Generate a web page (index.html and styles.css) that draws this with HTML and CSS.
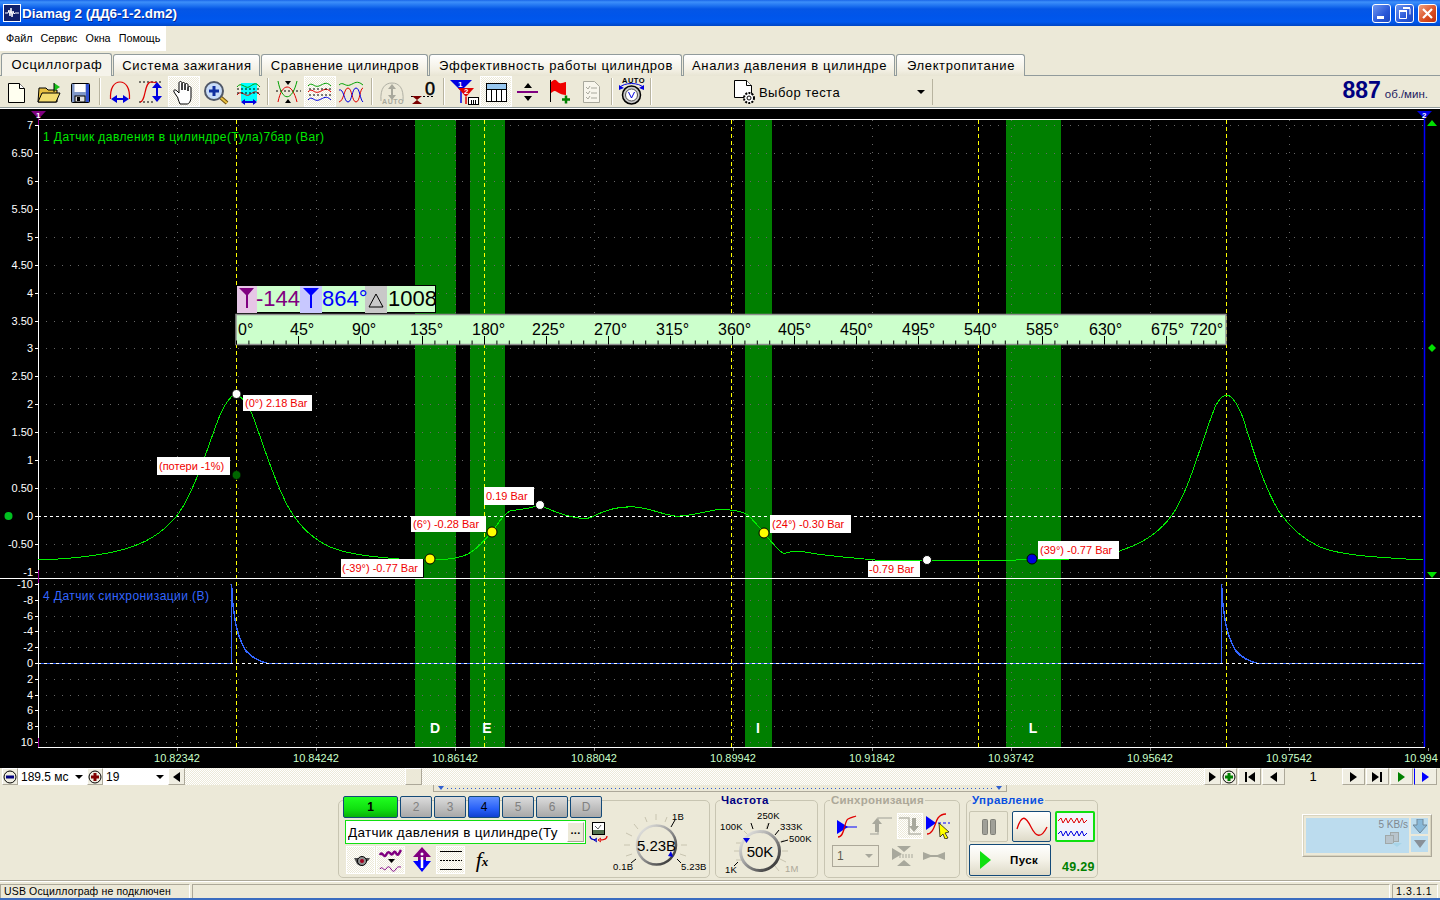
FILE: index.html
```html
<!DOCTYPE html>
<html lang="ru">
<head>
  <meta charset="UTF-8">
  <title>Diamag 2</title>
  <link rel="stylesheet" href="styles.css">
</head>
<body>
  <div class="titlebar">
    <svg class="app-icon" width="18" height="18" viewBox="0 0 18 18"><rect x=".5" y=".5" width="17" height="17" fill="#10206a" stroke="#fff"/><path d="M2 9h3l1-3 1 6 1-8 1 9 1-6 1 3 1-1h4" fill="none" stroke="#fff"/></svg>
    <span class="title-text">Diamag 2 (ДД6-1-2.dm2)</span>
    <div class="win-btns">
      <div class="win-btn"><svg width="19" height="19"><rect x="5" y="12" width="7" height="3" fill="#fff"/></svg></div>
      <div class="win-btn"><svg width="19" height="19"><path d="M8 4.500h7v6M4.500 7.500h7v7h-7z" fill="none" stroke="#fff"/><path d="M4 7h8M8 4h7" stroke="#fff" stroke-width="2"/></svg></div>
      <div class="win-btn close"><svg width="19" height="19"><path d="M5 5l9 9M14 5l-9 9" stroke="#fff" stroke-width="2.200"/></svg></div>
    </div>
  </div>

  <div class="menubar">
    <div class="menu"><span>Файл</span><span>Сервис</span><span>Окна</span><span>Помощь</span></div>
  </div>

  <div class="tabs">
    <div class="tab active">Осциллограф</div>
    <div class="tab w1">Система зажигания</div>
    <div class="tab w2">Сравнение цилиндров</div>
    <div class="tab w3">Эффективность работы цилиндров</div>
    <div class="tab w4">Анализ давления в цилиндре</div>
    <div class="tab w5">Электропитание</div>
  </div>

  <div class="toolbar">
    <div class="tb"><svg width="32" height="31"><path d="M8.500 7.500h11l5 5v14h-16z" fill="#fffff0" stroke="#000"/><path d="M19.500 7.500v5h5" fill="#fff" stroke="#000"/></svg></div>
    <div class="tb"><svg width="32" height="31"><path d="M6 26l1-14h7l2 2h9v12z" fill="#e8c040" stroke="#000"/><path d="M6 26l4-9h18l-4 9z" fill="#f4dc70" stroke="#000"/><path d="M22 7l6 4-6 4z" fill="#18c018"/><path d="M22 7v9" stroke="#000"/></svg></div>
    <div class="tb"><svg width="32" height="31"><rect x="7.500" y="7.500" width="18" height="19" rx="1" fill="#8098c8" stroke="#000"/><rect x="10.500" y="8" width="11" height="8" fill="#fff"/><rect x="11" y="20" width="10" height="6" fill="#e0e0e0" stroke="#000"/><rect x="13" y="21" width="3" height="4" fill="#000"/><rect x="22" y="8" width="3" height="18" fill="#3050d0"/></svg></div>
    <div class="tb-sep"></div>
    <div class="tb"><svg width="32" height="31"><path d="M6.500 23C6 12 10 6 16 6s10 6 9.500 17" fill="none" stroke="#e00000" stroke-width="1.200"/><path d="M9 23h14" stroke="#0000e0" stroke-width="2"/><path d="M13 19l-6 4 6 4zM19 19l6 4-6 4z" fill="#0000e0"/></svg></div>
    <div class="tb"><svg width="32" height="31"><path d="M3 6h24M3 26h14" stroke="#000" stroke-dasharray="2 2"/><path d="M4 26c6 0 4-20 11-20 3 0 5 0 7 2" fill="none" stroke="#e00000" stroke-width="1.200"/><path d="M21 9v14" stroke="#0000e0" stroke-width="2"/><path d="M16 12l5-6 5 6zM16 20l5 6 5-6z" fill="#0000e0"/></svg></div>
    <div class="tb pressed"><svg width="32" height="31"><path d="M10 22l-4-6c-1-2 1-3 3-1l2 2V7c0-2 3-2 3 0v7-6c0-2 3-2 3 0v6-5c0-2 3-2 3 0v6-3c0-2 3-2 3 0v9c0 4-2 7-4 7h-7c-1-2-1-3-2-5z" fill="#fff" stroke="#000"/></svg></div>
    <div class="tb"><svg width="32" height="31"><path d="M19 20l8 7" stroke="#705010" stroke-width="4"/><path d="M20 21l7 6" stroke="#e8c040" stroke-width="2"/><circle cx="14" cy="15" r="9" fill="#c8dcf8" stroke="#505868" stroke-width="2"/><path d="M9 15h10M14 10v10" stroke="#1030a0" stroke-width="3"/></svg></div>
    <div class="tb"><svg width="32" height="31"><rect x="9" y="7" width="16" height="18" fill="#00ffff"/><path d="M5 11c4-6 8 2 12 0s6-6 11 0" fill="none" stroke="#00a000"/><path d="M5 19c4-6 8 2 12 0s6-6 11 0" fill="none" stroke="#e00000"/><path d="M5 13h24M5 17h24" stroke="#000" stroke-dasharray="2 2"/><path d="M11 26h12" stroke="#0000e0" stroke-width="2"/><path d="M13 23l-4 3 4 3zM21 23l4 3-4 3z" fill="#0000e0"/></svg></div>
    <div class="tb-sep"></div>
    <div class="tb"><svg width="32" height="31"><path d="M4 15h25" stroke="#000" stroke-dasharray="2 2"/><path d="M6 26C10 6 20 6 25 26" fill="none" stroke="#e00000"/><path d="M6 5C10 26 20 26 25 5" fill="none" stroke="#00a000"/><path d="M13 5h6l-3 4zM13 27h6l-3-4z"/></svg></div>
    <div class="tb pressed"><svg width="32" height="31"><path d="M4 10c4-5 6 2 11 0s7-5 12 0" fill="none" stroke="#00a000"/><path d="M4 16c4-5 6 2 11 0s7-5 12 0" fill="none" stroke="#e00000"/><path d="M4 24c4-5 6 2 11 0s7-5 12 0" fill="none" stroke="#0000e0"/><path d="M5 13h23M5 19h23" stroke="#000" stroke-dasharray="2 2"/></svg></div>
    <div class="tb"><svg width="32" height="31"><path d="M3 9c4-4 6 2 11 0s7-5 13 0" fill="none" stroke="#00a000"/><path d="M3 26c5-1 5-14 9-14s4 14 8 14 4-14 7-14" fill="none" stroke="#e00000"/><path d="M3 14c5-2 5 12 9 12s4-14 8-14 4 12 7 14" fill="none" stroke="#0000e0"/></svg></div>
    <div class="tb-sep"></div>
    <div class="tb"><svg width="32" height="31"><path d="M5 25C4 12 9 7 16 7s12 5 11 18" fill="none" stroke="#b0b0a4"/><path d="M16 11v10" stroke="#a8a89c" stroke-width="2"/><path d="M12 13l4-5 4 5zM12 19l4 5 4-5z" fill="#a8a89c"/><text class="auto-txt" x="6" y="28">AUTO</text></svg></div>
    <div class="tb"><svg width="32" height="31"><path d="M3 20.500h24" stroke="#000" stroke-dasharray="2 2"/><path d="M4 20h10l-5 4zM4 28h10l-5-4z" fill="#7a0000"/><text class="zero-txt" x="17" y="19">0</text></svg></div>
    <div class="tb-sep"></div>
    <div class="tb"><svg width="32" height="31"><path d="M2 4h22l-11 11z" fill="#0000e0"/><path d="M13 15v12" stroke="#0000e0" stroke-width="1.500"/><text class="mark-txt" x="10" y="11">1</text><path d="M10 12h16l-8 9z" fill="#e00000"/><path d="M18 21v7" stroke="#e00000" stroke-width="1.500"/><text class="mark-txt" x="16" y="18">2</text><rect x="20.500" y="21.500" width="10" height="7" fill="#fff" stroke="#000"/><path d="M23.500 24v4M25.500 24v4M27.500 24v4" stroke="#000"/></svg></div>
    <div class="tb pressed"><svg width="32" height="31"><rect x="6.500" y="7.500" width="20" height="18" fill="#fff" stroke="#000"/><rect x="7" y="8" width="19" height="5" fill="#98c8f0"/><path d="M6 13.500h21M11.500 13v13M16.500 13v13M21.500 13v13" stroke="#000"/></svg></div>
    <div class="tb"><svg width="32" height="31"><path d="M5 16h21" stroke="#800080" stroke-width="2"/><path d="M12 12l4-5 4 5zM12 20l4 5 4-5z"/></svg></div>
    <div class="tb"><svg width="32" height="31"><path d="M6.500 4v22" stroke="#000"/><path d="M7 6c4-3 4-3 7 0s5 0 8 0v13c-3 0-6-1-9-3s-3-1-6 1z" fill="#f00000"/><path d="M18 23.500h8M22 19.500v8" stroke="#008000" stroke-width="2.500"/></svg></div>
    <div class="tb"><svg width="32" height="31"><path d="M7.500 5.500h11l5 5v16h-16z" fill="#f8f6ec" stroke="#a8a89c"/><path d="M10 11l2 2 2-3M10 16l2 2 2-3M10 21l2 2 2-3M15 12h6M15 17h6M15 22h6" fill="none" stroke="#a8a89c"/></svg></div>
    <div class="tb-sep"></div>
    <div class="tb"><svg width="32" height="31"><text class="auto-top" x="6" y="7">AUTO</text><path d="M3 12c5-6 20-6 25 0" fill="none" stroke="#0000e0"/><path d="M3 9v5l5-2zM28 9v5l-5-2z" fill="#0000e0"/><circle cx="15.500" cy="19" r="9" fill="#c8c8c8" stroke="#000" stroke-width="1.500"/><circle cx="15.500" cy="19" r="6" fill="#fff" stroke="#505050"/><path d="M12.500 16l3 6 3-6" fill="none" stroke="#0000e0"/></svg></div>
    <div class="tb-sep last"></div>
    <div class="test-select">
      <svg width="24" height="26"><path d="M1.500 1.500h12l5 5v12h-17z" fill="#fff" stroke="#000"/><path d="M13.500 1.500v5h5" fill="#fff" stroke="#000"/><circle cx="16" cy="19" r="5" fill="#fff" stroke="#000" stroke-width="2" stroke-dasharray="2 1.200"/><circle cx="16" cy="19" r="2" fill="none" stroke="#000"/></svg>
      <span class="test-label">Выбор теста</span>
      <span class="arrow"></span>
    </div>
    <div class="rpm"><b>887</b><span>об./мин.</span></div>
  </div>

  <div class="scope">
    <svg width="1440" height="660" viewBox="0 108 1440 660">
      <!-- зоны -->
      <path fill="#007f00" d="M415 120h41v627h-41zM470 120h35v627h-35zM745 120h27v627h-27zM1006 120h55v627h-55z"/>
      <!-- сетка -->
      <path class="grid-h" d="M38 125.500H1424M38 153.500H1424M38 181.500H1424M38 209.500H1424M38 237.500H1424M38 265.500H1424M38 293.500H1424M38 321.500H1424M38 348.500H1424M38 376.500H1424M38 404.500H1424M38 432.500H1424M38 460.500H1424M38 488.500H1424M38 544.500H1424M38 572.500H1424M38 584.500H1424M38 600.500H1424M38 616.500H1424M38 631.500H1424M38 647.500H1424M38 679.500H1424M38 695.500H1424M38 710.500H1424M38 726.500H1424M38 742.500H1424"/>
      <path class="grid-v" d="M177.500 120V747M316.500 120V747M455.500 120V747M594.500 120V747M733.500 120V747M872.500 120V747M1011.500 120V747M1150.500 120V747M1289.500 120V747"/>
      <path class="cursor-v" d="M236.500 120V747M484.500 120V747M731.500 120V747M978.500 120V747M1226.500 120V747"/>
      <path class="zero-line" d="M38 516.500H1424"/>
      <!-- оси -->
      <path class="axis" d="M38 119.500H1425M0 578.500H1440M38 747.500H1425M38.500 119V748"/>
      <path class="axis" d="M35 125.500h3M35 153.500h3M35 181.500h3M35 209.500h3M35 237.500h3M35 265.500h3M35 293.500h3M35 321.500h3M35 348.500h3M35 376.500h3M35 404.500h3M35 432.500h3M35 460.500h3M35 488.500h3M35 516.500h3M35 544.500h3M35 572.500h3M35 584.500h3M35 600.500h3M35 616.500h3M35 631.500h3M35 647.500h3M35 663.500h3M35 679.500h3M35 695.500h3M35 710.500h3M35 726.500h3M35 742.500h3"/>
      <path class="tick" d="M177.500 748v3M316.500 748v3M455.500 748v3M594.500 748v3M733.500 748v3M872.500 748v3M1011.500 748v3M1150.500 748v3M1289.500 748v3M1428.500 748v3"/>
      <path d="M38.500 119v6M38.500 570v13M38.500 738v9" stroke="#a000a0" fill="none"/>
      <path d="M1424.500 118V747" stroke="#0000ff" fill="none" stroke-width="1.500"/>
      <g class="y-labels">
        <text x="33" y="129">7</text><text x="33" y="157">6.50</text><text x="33" y="185">6</text><text x="33" y="213">5.50</text><text x="33" y="241">5</text><text x="33" y="269">4.50</text><text x="33" y="297">4</text><text x="33" y="325">3.50</text><text x="33" y="352">3</text><text x="33" y="380">2.50</text><text x="33" y="408">2</text><text x="33" y="436">1.50</text><text x="33" y="464">1</text><text x="33" y="492">0.50</text><text x="33" y="520">0</text><text x="33" y="548">-0.50</text><text x="33" y="576">-1</text>
        <text x="33" y="588">-10</text><text x="33" y="604">-8</text><text x="33" y="620">-6</text><text x="33" y="635">-4</text><text x="33" y="651">-2</text><text x="33" y="667">0</text><text x="33" y="683">2</text><text x="33" y="699">4</text><text x="33" y="714">6</text><text x="33" y="730">8</text><text x="33" y="746">10</text>
      </g>
      <g class="x-labels">
        <text x="177" y="762">10.82342</text><text x="316" y="762">10.84242</text><text x="455" y="762">10.86142</text><text x="594" y="762">10.88042</text><text x="733" y="762">10.89942</text><text x="872" y="762">10.91842</text><text x="1011" y="762">10.93742</text><text x="1150" y="762">10.95642</text><text x="1289" y="762">10.97542</text><text x="1421" y="762">10.994</text>
      </g>
      <text class="ch-green" x="43" y="141">1 Датчик давления в цилиндре(Тула)7бар (Bar)</text>
      <text class="ch-blue" x="43" y="600">4 Датчик синхронизации (В)</text>
      <!-- кривые -->
      <path class="trace-green" d="M38 560C70 559 100 556 125 549 145 543 160 535 175 518 192 498 205 455 218 420 224 405 230 396 236 394 241 396 247 404 252 414 262 440 275 485 290 510 302 530 315 540 330 547 350 555 375 557 405 559.500H430C445 560 458 559 468 554 478 549 484 540 492 532 498 524 503 514 510 511 520 509 530 509 540 505 550 510 555 512 565 515 575 518 585 520 592 517 605 510 620 506 635 507 650 508 660 514 675 516 685 517 700 513 715 510 730 509 740 510 748 515 755 522 760 528 764 533 772 543 778 550 784 554 790 551 797 551 805 552 825 556 845 557 880 560.500H1000.500L1032 559.500H1060C1080 559 1110 556 1125 549 1145 542 1160 532 1172 515 1190 490 1203 435 1216 405 1220 398 1224 395 1227 395 1232 396 1238 405 1243 418 1253 450 1265 490 1280 513 1292 530 1305 540 1320 547 1340 555 1370 557 1423 560"/>
      <path class="trace-blue" d="M38 663.500H231.500V584.500C232 598 233 608 235 620 237 632 241 643 246 651 251 657 258 661 268 663.500H1221.500V584.500C1222 598 1223 608 1225 620 1227 632 1231 643 1236 651 1241 657 1248 661 1258 663.500H1424"/>
      <path class="zero-line" d="M38 663.500H1424"/>
      <!-- подписи зон -->
      <g class="zone-labels"><text x="435" y="733">D</text><text x="487" y="733">E</text><text x="758" y="733">I</text><text x="1033" y="733">L</text></g>
      <!-- линейка -->
      <rect x="236.500" y="285.500" width="199" height="27" fill="#ccffcc" stroke="#000"/>
      <rect x="237" y="286" width="20" height="27" fill="#e6c6e6"/><rect x="300" y="286" width="22" height="27" fill="#c8c8ff"/><rect x="365" y="286" width="22" height="27" fill="#c8c8c8"/>
      <path d="M239 288h15l-6 7v13h-2V295z" fill="#800080"/><path d="M303 288h16l-7 7v13h-2V295z" fill="#0000ff"/><path d="M376 294l7 13h-14z" fill="none" stroke="#000"/>
      <text class="big-purple" x="256" y="306">-144</text><text class="big-blue" x="322" y="306">864°</text><text class="big-black" x="388" y="306">1008</text>
      <rect x="236" y="314.500" width="990" height="30" fill="#ccffcc" stroke="#909090" stroke-width="1.500"/>
      <path class="ruler-major" d="M298.500 336v8M360.500 336v8M422.500 336v8M484.500 336v8M546.500 336v8M608.500 336v8M670.500 336v8M732.500 336v8M794.500 336v8M856.500 336v8M918.500 336v8M980.500 336v8M1042.500 336v8M1104.500 336v8M1166.500 336v8"/>
      <path class="ruler-minor" d="M236 342.500H1226"/>
      <g class="ruler-txt">
        <text x="238" y="335">0°</text><text x="290" y="335">45°</text><text x="352" y="335">90°</text><text x="410" y="335">135°</text><text x="472" y="335">180°</text><text x="532" y="335">225°</text><text x="594" y="335">270°</text><text x="656" y="335">315°</text><text x="718" y="335">360°</text><text x="778" y="335">405°</text><text x="840" y="335">450°</text><text x="902" y="335">495°</text><text x="964" y="335">540°</text><text x="1026" y="335">585°</text><text x="1089" y="335">630°</text><text x="1151" y="335">675°</text><text x="1190" y="335">720°</text>
      </g>
      <!-- значения -->
      <g class="val">
        <rect x="243" y="395" width="69" height="16"/><text x="245" y="407">(0°) 2.18 Bar</text>
        <rect x="157" y="457" width="73" height="18"/><text x="159" y="470">(потери -1%)</text>
        <rect x="484" y="487" width="50" height="18"/><text x="486" y="500">0.19 Bar</text>
        <rect x="411" y="516" width="75" height="16"/><text x="413" y="528">(6°) -0.28 Bar</text>
        <rect x="341" y="559" width="82" height="18"/><text x="342" y="572">(-39°) -0.77 Bar</text>
        <path d="M423.500 559v18.500H341" fill="none" stroke="#000"/>
        <rect x="770" y="515" width="81" height="18"/><text x="772" y="528">(24°) -0.30 Bar</text>
        <rect x="868" y="561" width="52" height="16"/><text x="869" y="573">-0.79 Bar</text>
        <rect x="1038" y="541" width="81" height="18"/><text x="1040" y="554">(39°) -0.77 Bar</text>
      </g>
      <g class="dots">
        <circle cx="236.500" cy="394" r="4.500" fill="#fff"/><circle cx="236.500" cy="475" r="4.500" fill="#006600"/>
        <circle cx="430" cy="559" r="5" fill="#ffff00"/><circle cx="492" cy="532" r="5" fill="#ffff00"/><circle cx="764" cy="533" r="5" fill="#ffff00"/>
        <circle cx="540" cy="505" r="4.500" fill="#fff"/><circle cx="927" cy="560" r="4.500" fill="#fff"/><circle cx="1032" cy="559" r="5" fill="#0000e0"/>
      </g>
      <!-- маркеры -->
      <path d="M31 111h15l-7.500 8z" fill="#800080"/><text class="mark-txt" x="36" y="118">1</text>
      <path d="M1417 111h15l-7.500 8z" fill="#0000e0"/><text class="mark-txt" x="1422" y="118">2</text>
      <path d="M1427 126l5-6 5 6zM1427 572l5 6 5-6zM1432 344l4 4-4 4-4-4z" fill="#00e000"/>
      <circle cx="8.500" cy="516" r="4" fill="#00c020"/>
    </svg>
  </div>

  <div class="scrollrow">
    <div class="sbtn"><svg width="14" height="14"><circle cx="7" cy="7" r="6" fill="none" stroke="#000"/><path d="M3 7h8" stroke="#000080" stroke-width="3"/></svg></div>
    <div class="combo c1">189.5 мс<span class="arrow"></span></div>
    <div class="sbtn"><svg width="14" height="14"><circle cx="7" cy="7" r="6" fill="none" stroke="#000"/><path d="M3 7h8M7 3v8" stroke="#800000" stroke-width="3"/></svg></div>
    <div class="combo c2">19<span class="arrow"></span></div>
    <div class="sbtn arr"><span class="tri-l"></span></div>
    <div class="track"><div class="thumb"></div></div>
    <div class="sbtn arr"><span class="tri-r"></span></div>
    <div class="sbtn"><svg width="14" height="14"><circle cx="7" cy="7" r="6" fill="none" stroke="#000"/><path d="M3 7h8M7 3v8" stroke="#008000" stroke-width="3"/></svg></div>
    <div class="sbtn wide"><i class="bar"></i><span class="tri-l"></span></div>
    <div class="sbtn wide"><span class="tri-l"></span></div>
    <div class="page-no">1</div>
    <div class="sbtn wide"><span class="tri-r"></span></div>
    <div class="sbtn wide"><span class="tri-r"></span><i class="bar"></i></div>
    <div class="sbtn wide"><span class="tri-r green"></span></div>
    <div class="sbtn wide blue-edge"><span class="tri-r blue"></span></div>
  </div>

  <div class="lower">
    <div class="mini-strip"><span class="mini-tri"></span><span class="mini-dots"></span><span class="mini-tri"></span></div>
    <div class="panels">
      <div class="group g-channel">
        <div class="ch-side">
          <div class="ch-btns">
            <div class="ch on-green">1</div><div class="ch">2</div><div class="ch">3</div><div class="ch on-blue">4</div><div class="ch">5</div><div class="ch">6</div><div class="ch">D</div>
          </div>
          <div class="ch-input-row">
            <div class="ch-input"><span>Датчик давления в цилиндре(Ту</span><div class="dots-btn">...</div></div>
            <svg width="20" height="22"><rect x="3.500" y="1.500" width="12" height="12" fill="#fff" stroke="#000"/><rect x="4" y="9" width="11" height="4" fill="#507050"/><path d="M6 5l3 3 3-4" fill="none" stroke="#606060"/><path d="M1 15c0 4 4 4 7 4" fill="none" stroke="#0000c0" stroke-width="1.300"/><path d="M8 17l-3 2 3 2" fill="none" stroke="#0000c0"/><path d="M11 19c4 0 7-1 7-4" fill="none" stroke="#e00000" stroke-width="1.300"/><path d="M12 17l-3 2 3 2" fill="none" stroke="#e00000"/></svg>
          </div>
          <div class="ch-tools">
            <div class="ct pressed"><svg width="28" height="28"><path d="M7 12h16l-2 3h-2c0 6-9 6-10 1z" fill="#505050"/><circle cx="15" cy="15" r="4.500" fill="#909090" stroke="#000"/><circle cx="15" cy="15" r="2" fill="#a00020"/></svg></div>
            <div class="ct pressed"><svg width="28" height="28"><path d="M3 9c2-5 4 4 6 0s3-3 5-1 3-5 5-1 3 0 5-3" fill="none" stroke="#800080" stroke-width="2.500"/><path d="M11 13h7l-3.500 4z"/><path d="M3 23c2-4 4 3 6 0s3-3 5 0 3 3 5 0 3-2 5-2" fill="none" stroke="#800080"/></svg></div>
            <div class="ct plain"><svg width="28" height="28"><path d="M14 1l9 10h-5v3h-8v-3H5z" fill="#800080"/><path d="M5 15h5v-1h8v1h5l-9 11z" fill="#0000ff"/><path d="M14 11v11" stroke="#fff" stroke-width="2.500"/><circle cx="14" cy="8" r="1.500" fill="#fff"/></svg></div>
            <div class="ct pressed narrow"><svg width="28" height="28"><path d="M3 5.500h22M3 23.500h22" stroke="#000"/><path d="M3 14.500h22" stroke="#000" stroke-dasharray="2 1"/></svg></div>
            <div class="ct plain fx"><i>f</i><b>x</b></div>
          </div>
        </div>
        <svg class="knob" width="98" height="76" viewBox="610 802 98 76">
          <path class="knob-ticks" d="M632 855l-6 2M630 846h-6M632 837l-6-3M638 830l-4-5M647 823l-2-5M656 821v-6M665 823l2-5M681 846h6M680 855l6 2"/>
          <path d="M636 860l-5 4M671 828l4-7M677 860l4 4" stroke="#000" fill="none"/>
          <circle cx="656.500" cy="846" r="19.500" fill="none" stroke="url(#ring)" stroke-width="2.500"/>
          <path d="M668 857l5 1-2-6z" fill="#0000e0"/>
          <text class="knob-val" x="656.500" y="852">5.23В</text>
          <text class="knob-tx" x="672" y="821">1В</text><text class="knob-tx" x="613" y="871">0.1В</text><text class="knob-tx" x="681" y="871">5.23В</text>
        </svg>
      </div>

      <fieldset class="group g-freq">
        <legend class="lg-navy">Частота</legend>
        <svg class="knob" width="100" height="70" viewBox="716 808 100 70">
          <path class="knob-ticks" d="M742 843h-6M740 851h-6M742 860h-6M748 835l-4-4M766 829l2-6M775 835l4-5M778 843l6-3M782 851h6M780 859l6 3M775 866l4 5"/>
          <path d="M738 862l-4 4M753 829l-2-6M767 829l2-6M775 835l4-5M781 842l7-2" stroke="#000" fill="none"/>
          <circle cx="760" cy="851" r="19.500" fill="none" stroke="url(#ring)" stroke-width="3"/>
          <path d="M743 838h7l-3.500 5z" fill="#0000e0"/>
          <text class="knob-val" x="760" y="857">50K</text>
          <text class="knob-tx" x="720" y="830">100K</text><text class="knob-tx" x="757" y="819">250K</text><text class="knob-tx" x="780" y="830">333K</text><text class="knob-tx" x="789" y="842">500K</text><text class="knob-tx" x="725" y="873">1K</text><text class="knob-tx dim" x="785" y="872">1M</text>
        </svg>
      </fieldset>

      <fieldset class="group g-sync">
        <legend class="lg-gray">Синхронизация</legend>
        <div class="sync-row">
          <svg width="26" height="26"><path d="M2 5l11 7-11 7z" fill="#0000ff" transform="translate(0 2)"/><path d="M2 14h20" stroke="#0000ff"/><path d="M3 24c7 0 6-16 10-18s6-2 8-3" fill="none" stroke="#e00000" stroke-width="1.300"/></svg>
          <svg width="26" height="26" class="sp1"><path d="M2 21h8V5h14" fill="none" stroke="#b8b8ac" stroke-width="1.500"/><path d="M4 11l5-6 5 6h-3v8H7v-8z" fill="#a8a89c"/></svg>
          <div class="sync-pressed"><svg width="26" height="26"><path d="M2 5h10v16h12" fill="none" stroke="#b8b8ac" stroke-width="1.500"/><path d="M12 13l5 6 5-6h-3V5h-4v8z" fill="#a8a89c"/></svg></div>
          <svg width="26" height="26"><path d="M0 3l10 7-10 7z" fill="#0000ff"/><path d="M2 10h22" stroke="#0000ff" stroke-dasharray="3 2"/><path d="M1 21c7 0 8-12 11-16s6-4 8-4" fill="none" stroke="#e00000" stroke-width="1.300"/><path d="M13 10l10 9-4 1 3 5-3 1-2-5-3 3z" fill="#ffff00" stroke="#000" stroke-width=".700"/></svg>
        </div>
        <div class="sync-row second">
          <div class="sync-sel">1<span class="arrow gray"></span></div>
          <svg width="24" height="24"><path d="M1 4l10 6-10 6zM6 2h14l-7 6zM6 22h14l-7-6z" fill="#a8a89c"/><path d="M8 11h14M8 13h14" stroke="#a8a89c" stroke-dasharray="2 1"/></svg>
          <svg class="sp2" width="24" height="24"><path d="M1 8l10 4-10 4zM23 8l-10 4 10 4z" fill="#a8a89c"/><path d="M1 12h22" stroke="#a8a89c" stroke-width="2"/></svg>
        </div>
      </fieldset>

      <fieldset class="group g-ctrl">
        <legend class="lg-blue">Управление</legend>
        <div class="ctrl-grid">
          <div class="cbtn"><svg width="20" height="18"><rect x="3.500" y="1.500" width="5" height="15" rx="1" fill="#a0a098" stroke="#808078"/><rect x="11.500" y="1.500" width="5" height="15" rx="1" fill="#a0a098" stroke="#808078"/></svg></div>
          <div class="cbtn navy"><svg width="32" height="24"><path d="M1 14C6 -2 10 2 15 12s10 12 16 0" fill="none" stroke="#e00000" stroke-width="1.300"/></svg></div>
          <div class="cbtn greenb"><svg width="36" height="26"><path d="M1 7l3-3 2 5 3-5 2 5 3-5 3 5 3-5 2 5 3-5 2 5 3-3" fill="none" stroke="#e00000"/><path d="M1 20l3-3 2 5 3-5 2 5 3-5 3 5 3-5 2 5 3-5 2 5 3-3" fill="none" stroke="#0000e0"/></svg></div>
          <div class="cbtn navy start"><span class="play"></span><b>Пуск</b></div>
          <div class="hz">49.29</div>
        </div>
      </fieldset>

      <div class="netbox">
        <div class="net-main">
          <span>5 KB/s</span>
          <svg width="18" height="18"><rect x="5.500" y="2.500" width="8" height="9" fill="#b8c4cc" stroke="#a0a8a8"/><rect x=".5" y="5.500" width="8" height="8" fill="#b8c4cc" stroke="#a0a8a8"/><path d="M7 13h10l-5 4z" fill="#a8d4e8"/></svg>
        </div>
        <div class="net-side">
          <div class="net-btn"><svg width="14" height="14"><path d="M4 0h6v6h4l-7 8-7-8h4z" fill="#88b8d8" stroke="#708898"/></svg></div>
          <div class="net-btn"><svg width="12" height="8"><path d="M0 0h12L6 8z" fill="#889098"/></svg></div>
        </div>
      </div>
    </div>
  </div>

  <div class="statusbar">
    <div class="st s1">USB Осциллограф не подключен</div>
    <div class="st s2"></div>
    <div class="st s3">1.3.1.1</div>
  </div>
  <div class="taskline"></div>

  <svg width="0" height="0" class="defs"><defs><linearGradient id="ring" x1="0" y1="0" x2="1" y2="1"><stop offset="0" stop-color="#f4f4f0"/><stop offset=".45" stop-color="#a0a0a0"/><stop offset="1" stop-color="#202020"/></linearGradient></defs></svg>
</body>
</html>
```

FILE: styles.css
```css
* { box-sizing: border-box; }

body {
  margin: 0;
  width: 1440px;
  height: 900px;
  overflow: hidden;
  background: #ece9d8;
  font-family: "Liberation Sans", Arial, sans-serif;
  font-size: 12px;
  color: #000;
}

svg { display: block; flex: none; }
.defs { position: absolute; }

/* заголовок окна */
.titlebar {
  height: 26px;
  display: flex;
  align-items: center;
  padding-left: 3px;
  background: linear-gradient(#1a66e8 0, #3d8ffa 2px, #2478f2 5px, #0456e6 9px, #0055ea 16px, #0058ee 22px, #0046c4 26px);
}
.title-text {
  margin-left: 1px;
  color: #fff;
  font-size: 13.500px;
  font-weight: bold;
  text-shadow: 1px 1px 0 #0a2a90;
}
.win-btns { margin-left: auto; display: flex; gap: 4px; padding-right: 3px; }
.win-btn {
  width: 19px;
  height: 19px;
  border: 1px solid #fff;
  border-radius: 3px;
  background: linear-gradient(135deg, #7098f0, #2a58d8 60%, #1c48c0);
}
.win-btn svg { margin: -1px; }
.win-btn.close { background: linear-gradient(135deg, #f0a080, #d84c20 60%, #c03010); }

/* меню */
.menubar { height: 25px; }
.menu {
  width: 166px;
  height: 25px;
  background: #fff;
  display: flex;
  align-items: center;
  gap: 8px;
  padding: 0 0 2px 6px;
  font-size: 10.800px;
}

/* вкладки */
.tabs {
  height: 25px;
  padding: 2px 0 0 1px;
  display: flex;
  gap: 1px;
  border-bottom: 1px solid #919b9c;
}
.tab {
  height: 22px;
  margin-top: 1px;
  padding: 3px 0 0 1px;
  border: 1px solid #919b9c;
  border-bottom: 0;
  border-radius: 3px 3px 0 0;
  background: linear-gradient(#fff, #f3f0e4 70%, #e8e5d4);
  text-align: center;
  font-size: 13px;
  letter-spacing: .65px;
  white-space: nowrap;
}
.tab.active {
  width: 111px;
  height: 23px;
  margin-top: 0;
  background: #f5f3ea;
}
.w1 { width: 147px; }
.w2 { width: 167px; }
.w3 { width: 253px; }
.w4 { width: 212px; }
.w5 { width: 129px; }

/* панель инструментов */
.toolbar {
  height: 32px;
  display: flex;
  align-items: center;
  border-bottom: 1px solid #919b9c;
}
.tb { width: 32px; height: 31px; }
.tb.pressed, .ct.pressed, .sync-pressed {
  background: repeating-conic-gradient(#fff 0 25%, #ece9d8 0 50%) 0 0 / 2px 2px;
  outline: 1px solid #fff;
  outline-offset: -1px;
}
.tb-sep {
  width: 8px;
  height: 27px;
  background: linear-gradient(90deg, transparent 3px, #b8b4a0 3px, #b8b4a0 4px, #fff 4px, #fff 5px, transparent 5px);
}
.tb-sep.last { margin-left: -1px; }
.auto-txt { font-size: 7px; font-weight: bold; fill: #a8a89c; letter-spacing: .6px; }
.auto-top { font-size: 7.500px; font-weight: bold; fill: #000; letter-spacing: .5px; }
.zero-txt { font-size: 18px; fill: #000; stroke: #000; stroke-width: .5px; }
.mark-txt { font-size: 8px; font-weight: bold; fill: #fff; }
.test-select {
  width: 200px;
  margin-left: 78px;
  height: 26px;
  display: flex;
  align-items: center;
  border-right: 1px solid #b8b4a0;
}
.test-label { margin: 1px 0 0 2px; font-size: 13px; letter-spacing: .45px; }
.test-select .arrow { margin-left: auto; margin-right: 7px; }
.arrow {
  display: inline-block;
  width: 0;
  height: 0;
  border: 4px solid transparent;
  border-top: 4px solid #000;
  border-bottom: 0;
}
.arrow.gray { border-top-color: #a8a89c; }
.rpm {
  margin: -3px 0 0 auto;
  padding-right: 12px;
  display: flex;
  align-items: baseline;
  gap: 4px;
  color: #000080;
}
.rpm b { font-size: 23px; }
.rpm span { font-size: 11.500px; color: #202060; }

/* осциллограмма */
.scope {
  height: 660px;
  background: #000;
  border-top: 1px solid #fff;
  overflow: hidden;
}
.scope svg { margin-top: -1px; }
.scope text { font-family: "Liberation Sans", Arial, sans-serif; }
.grid-h { stroke: #666; stroke-dasharray: 1 7; fill: none; }
.grid-v { stroke: #666; stroke-dasharray: 1 7; fill: none; }
.cursor-v { stroke: #ffff00; stroke-dasharray: 4 3; fill: none; }
.zero-line { stroke: #fff; stroke-dasharray: 3 3; fill: none; }
.axis { stroke: #fff; fill: none; }
.tick { stroke: #909090; fill: none; }
.y-labels text { fill: #fff; font-size: 11px; text-anchor: end; }
.x-labels text { fill: #c8ffc8; font-size: 11px; text-anchor: middle; }
.ch-green { fill: #00e800; font-size: 12px; letter-spacing: .42px; }
.ch-blue { fill: #3366ff; font-size: 12px; letter-spacing: .42px; }
.trace-green { stroke: #00ee00; fill: none; shape-rendering: crispEdges; }
.trace-blue { stroke: #3366ff; fill: none; stroke-width: 1.500; shape-rendering: crispEdges; }
.zone-labels text { fill: #fff; font-size: 14px; font-weight: bold; text-anchor: middle; }
.big-purple { fill: #800080; font-size: 22px; }
.big-blue { fill: #0000ff; font-size: 22px; }
.big-black { fill: #000; font-size: 22px; }
.ruler-major { stroke: #000; fill: none; }
.ruler-minor { stroke: #000; stroke-dasharray: 1 11.400; stroke-width: 4; fill: none; }
.ruler-txt text { fill: #000; font-size: 16px; }
.val rect { fill: #fff; }
.val text { fill: #f00000; font-size: 11px; }
.dots circle { stroke: #000; }

/* строка прокрутки */
.scrollrow {
  height: 17px;
  display: flex;
  padding-left: 2px;
  background: #ece9d8;
}
.sbtn {
  width: 16px;
  height: 17px;
  flex: none;
  display: flex;
  align-items: center;
  justify-content: center;
  background: #f0eee2;
  border: 1px solid;
  border-color: #fff #aca899 #aca899 #fff;
}
.sbtn.wide { width: 23px; margin-left: 1px; }
.sbtn.arr { width: 17px; }
.combo {
  flex: none;
  height: 17px;
  background: #fff;
  display: flex;
  align-items: center;
  padding-left: 3px;
  font-size: 12px;
}
.combo .arrow { margin-left: auto; margin-right: 4px; }
.c1 { width: 69px; }
.c2 { width: 65px; }
.track {
  width: 1019px;
  flex: none;
  height: 17px;
  padding-left: 220px;
  background: repeating-conic-gradient(#fff 0 25%, #ece9d8 0 50%) 0 0 / 2px 2px;
}
.thumb { width: 17px; height: 17px; background: #ece9d8; border: 1px solid; border-color: #fff #aca899 #aca899 #fff; }
.tri-l, .tri-r { width: 0; height: 0; border: 5px solid transparent; }
.tri-l { border-right: 7px solid #000; border-left: 0; }
.tri-r { border-left: 7px solid #000; border-right: 0; }
.tri-r.green { border-left-color: #008000; }
.tri-r.blue { border-left-color: #0000ff; }
.bar { width: 2px; height: 10px; background: #000; margin: 0 1px; }
.page-no { width: 56px; text-align: center; font-size: 13px; line-height: 17px; flex: none; }
.blue-edge { border-left-color: #0000ff; }

/* нижняя часть */
.lower { height: 95px; }
.mini-strip {
  width: 574px;
  height: 7px;
  margin-left: 433px;
  border: 1px solid #aca899;
  border-top: 0;
  display: flex;
  align-items: center;
  gap: 3px;
  padding: 0 4px;
}
.mini-dots {
  flex: 1;
  height: 1px;
  background: repeating-linear-gradient(90deg, #3060d0 0 1px, transparent 1px 4px);
}
.mini-tri { width: 0; height: 0; border: 3px solid transparent; border-top: 4px solid #3060d0; border-bottom: 0; }
.panels {
  display: flex;
  padding: 8px 0 0 338px;
}
.group {
  height: 78px;
  margin: 0;
  padding: 0;
  min-width: 0;
  border: 1px solid #c8c5b2;
  border-radius: 5px;
}
fieldset.group { height: 84px; margin-top: -6px; padding: 5px 0 0 4px; }
legend { padding: 0 1px; font-size: 11.500px; font-weight: bold; letter-spacing: .4px; line-height: 12px; margin-left: 4px; }
.lg-navy { color: #000080; }
.lg-gray { color: #aca899; letter-spacing: .25px; margin-left: 1px; }
.lg-blue { color: #0a50e0; margin-left: 0; }
.g-channel { width: 372px; display: flex; }
.g-freq { width: 103px; margin-left: 5px; }
.g-sync { width: 136px; margin-left: 6px; }
.g-ctrl { width: 132px; margin-left: 6px; }

.ch-side { width: 271px; padding-left: 4px; }
.ch-btns { display: flex; gap: 2px; margin-top: -5px; }
.ch {
  width: 32px;
  height: 22px;
  border: 1px solid #144a78;
  border-radius: 2px;
  background: linear-gradient(#dcdcdc, #bcbcbc 60%, #a8a8a8);
  color: #808080;
  text-align: center;
  line-height: 20px;
  font-size: 12px;
}
.on-green { width: 55px; background: linear-gradient(#20ff20, #10e010 60%, #08b008); color: #000; font-weight: bold; }
.on-blue { background: linear-gradient(#6090ff, #2860f8 60%, #1040d0); color: #000; }
.ch-input-row { display: flex; align-items: center; gap: 3px; margin-top: 2px; padding-left: 2px; }
.ch-input {
  width: 241px;
  height: 24px;
  border: 1px solid #10e010;
  background: #fff;
  display: flex;
  align-items: center;
  padding-left: 2px;
  font-size: 13.500px;
  letter-spacing: .3px;
  overflow: hidden;
  white-space: nowrap;
}
.ch-input span { flex: none; width: 219px; overflow: hidden; }
.dots-btn {
  width: 17px;
  height: 20px;
  background: #ece9d8;
  border: 1px solid;
  border-color: #fff #aca899 #aca899 #fff;
  text-align: center;
  font-size: 11px;
  font-weight: bold;
  line-height: 14px;
}
.ch-tools { display: flex; margin-top: 2px; padding-left: 3px; }
.ct { width: 29px; height: 28px; margin-right: 1px; display: flex; justify-content: center; }
.ct.plain { margin-left: 2px; width: 28px; }
.ct.narrow { margin-left: -1px; }
.fx { font-family: "Liberation Serif", serif; font-size: 22px; align-items: center; margin-left: 3px; }
.fx b { font-size: 13px; font-style: italic; margin-top: 4px; }
.knob { flex: none; }
.knob-ticks { stroke: #c8c4b0; fill: none; }
.knob-val { font-size: 15px; text-anchor: middle; fill: #000; }
.knob-tx { font-size: 9.500px; letter-spacing: .15px; fill: #000; }
.knob-tx.dim { fill: #aca899; }
.g-freq.group { padding: 0; }
.g-freq .knob { margin: 2px 0 0 0; }

.sync-row { display: flex; align-items: center; padding: 2px 0 0 6px; gap: 3px; }
.sync-row .sp1 { margin-left: 4px; }
.sync-pressed { width: 26px; height: 26px; }
.sync-row.second { padding: 5px 0 0 3px; gap: 0; }
.sync-sel {
  width: 47px;
  height: 22px;
  border: 1px solid #aca899;
  display: flex;
  align-items: center;
  padding-left: 4px;
  margin-right: 12px;
  color: #605c50;
}
.sync-sel .arrow { margin-left: auto; margin-right: 5px; }
.sp2 { margin-left: 7px; }

.ctrl-grid {
  display: grid;
  grid-template-columns: 39px 39px 40px;
  grid-template-rows: 31px 32px;
  gap: 2px 4px;
  margin: 0 0 0 -2px;
}
.cbtn {
  display: flex;
  align-items: center;
  justify-content: center;
  border: 1px solid #c8c5b2;
  border-radius: 2px;
}
.cbtn.navy {
  border: 1px solid #144a78;
  background: linear-gradient(#fff, #f4f2e8 50%, #dedac8);
}
.cbtn.greenb { border: 2px solid #10e010; background: #f4f4fc; }
.cbtn.start { grid-column: 1 / span 2; justify-content: flex-start; padding-left: 10px; }
.play { width: 0; height: 0; border: 9px solid transparent; border-left: 11px solid #10e010; border-right: 0; }
.start b { margin-left: 19px; font-size: 11.500px; letter-spacing: .4px; }
.hz { color: #008000; font-weight: bold; font-size: 12.500px; letter-spacing: .3px; align-self: end; padding: 0 0 2px 7px; white-space: nowrap; }

.netbox {
  width: 130px;
  height: 43px;
  margin: 14px 8px 0 auto;
  padding: 3px;
  display: flex;
  gap: 2px;
  border: 1px solid;
  border-color: #fff #aca899 #aca899 #fff;
  box-shadow: inset 0 0 0 1px #d8d4c0;
}
.net-main {
  width: 105px;
  background: #bcdcee;
  padding: 1px 1px 0 0;
  display: flex;
  flex-direction: column;
  align-items: flex-end;
  color: #808890;
  font-size: 10px;
}
.net-main svg { margin: 0 5px 0 0; }
.net-side { display: flex; flex-direction: column; gap: 2px; }
.net-btn { width: 17px; height: 16px; background: #bcdcee; display: flex; align-items: center; justify-content: center; }

/* статус */
.statusbar {
  height: 18px;
  display: flex;
  padding: 3px 2px 0 0;
  border-top: 1px solid #aca899;
  box-shadow: inset 0 1px 0 #fff;
}
.st {
  height: 14px;
  border-right: 1px solid #fff;
  border-top: 1px solid #aca899;
  border-left: 1px solid #aca899;
  font-size: 10.500px;
  line-height: 13px;
  padding-left: 3px;
  letter-spacing: .15px;
}
.s1 { width: 190px; }
.s2 { flex: 1; margin-left: 2px; }
.s3 { width: 46px; margin-left: 2px; letter-spacing: .6px; }
.taskline { height: 2px; background: #3a6cc0; }
```
